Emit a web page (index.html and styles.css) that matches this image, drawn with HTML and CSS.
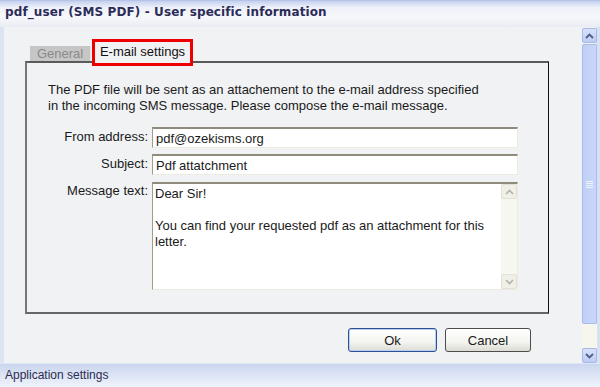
FILE: index.html
```html
<!DOCTYPE html>
<html lang="en">
<head>
    <meta charset="UTF-8">
    <title>pdf_user (SMS PDF) - User specific information</title>
    <link rel="stylesheet" href="styles.css">
</head>
<body>
    <div class="window">
        <div class="titlebar">pdf_user (SMS PDF) - User specific information</div>

        <div class="main">
            <div class="content">
                <div class="tabs">
                    <div class="tab">General</div>
                    <div class="tab active">E-mail settings</div>
                </div>

                <div class="panel">
                    <p class="intro">The PDF file will be sent as an attachement to the e-mail address specified in the incoming SMS message. Please compose the e-mail message.</p>

                    <div class="form">
                        <label for="from">From address:</label>
                        <input type="text" id="from" value="pdf@ozekisms.org">

                        <label for="subject">Subject:</label>
                        <input type="text" id="subject" value="Pdf attatchment">

                        <label>Message text:</label>
                        <div class="textarea">
                            <div class="textarea-text">
                                <p>Dear Sir!</p>
                                <p>You can find your requested pdf as an attachment for this letter.</p>
                            </div>
                            <div class="mini-scroll">
                                <div class="mini-btn">
                                    <svg width="9" height="6" viewBox="0 0 9 6"><polyline points="1,5 4.5,1.5 8,5" fill="none" stroke="#b4b4a8" stroke-width="1.6"/></svg>
                                </div>
                                <div class="mini-track"></div>
                                <div class="mini-btn">
                                    <svg width="9" height="6" viewBox="0 0 9 6"><polyline points="1,1 4.5,4.5 8,1" fill="none" stroke="#b4b4a8" stroke-width="1.6"/></svg>
                                </div>
                            </div>
                        </div>
                    </div>
                </div>

                <div class="buttons">
                    <button class="btn default">Ok</button>
                    <button class="btn">Cancel</button>
                </div>
            </div>

            <div class="scrollbar">
                <div class="scroll-btn">
                    <svg width="9" height="6" viewBox="0 0 9 6"><polyline points="1,5 4.5,1.5 8,5" fill="none" stroke="#4d5f86" stroke-width="1.8"/></svg>
                </div>
                <div class="scroll-thumb">
                    <span class="grip"></span>
                </div>
                <div class="scroll-track"></div>
                <div class="scroll-btn">
                    <svg width="9" height="6" viewBox="0 0 9 6"><polyline points="1,1 4.5,4.5 8,1" fill="none" stroke="#4d5f86" stroke-width="1.8"/></svg>
                </div>
            </div>
        </div>

        <div class="statusbar">Application settings</div>
    </div>
</body>
</html>
```

FILE: styles.css
```css
* {
    margin: 0;
    padding: 0;
    box-sizing: border-box;
}

body {
    width: 600px;
    height: 387px;
    overflow: hidden;
    background: #f1f2f4;
    font-family: 'Liberation Sans', Arial, sans-serif;
    font-size: 13px;
    color: #1a1a1a;
}

.window {
    display: flex;
    flex-direction: column;
    height: 387px;
}

.titlebar {
    height: 27px;
    padding: 4px 0 0 5px;
    background: linear-gradient(to bottom, #c4d0ee 0%, #eef1f9 25%, #f7f8fb 60%, #e9ecf3 100%);
    border-top: 1px solid #b6c4ea;
    font-family: 'DejaVu Sans', Verdana, sans-serif;
    font-weight: bold;
    font-size: 12px;
    color: #2c2c58;
    letter-spacing: 0.1px;
}

.main {
    flex: 1;
    display: flex;
    border-left: 4px solid #dce4f4;
    border-right: 4px solid #d8e1f4;
}

.content {
    flex: 1;
    padding: 12px 0 0 21px;
}

/* tabs */

.tabs {
    display: flex;
    align-items: flex-end;
    height: 22px;
    padding-left: 5px;
    gap: 1px;
}

.tab {
    height: 15px;
    width: 61px;
    background: #c6c6c6;
    color: #8a8a8a;
    text-align: center;
    line-height: 15px;
    border-right: 1px solid #e4e4e4;
}

.tab.active {
    position: relative;
    z-index: 1;
    width: 101px;
    height: 27px;
    margin-bottom: -5px;
    background: #f1f2f4;
    color: #111;
    border: 3px solid #ee0000;
    line-height: 19px;
}

.panel {
    width: 524px;
    height: 253px;
    border: 1px solid #111;
    border-top: 2px solid #5a5a5a;
    border-left: 2px solid #777;
    border-bottom: 2px solid #666;
    padding: 19px 0 0 21px;
}

.intro {
    width: 436px;
    line-height: 16px;
    color: #1a1a1a;
}

/* form */

.form {
    display: grid;
    grid-template-columns: 100px 366px;
    column-gap: 4px;
    row-gap: 6px;
    margin-top: 13px;
}

.form label {
    text-align: right;
    padding-top: 2px;
    color: #1a1a1a;
}

.form input {
    height: 21px;
    padding: 1px 0 0 3px;
    font-family: inherit;
    font-size: 13px;
    color: #1a1a1a;
    background: #fff;
    border: 1px solid #ecebe2;
    border-top: 2px solid #8e8b7c;
    border-left: 1px solid #a09c8c;
    outline: none;
}

.textarea {
    display: flex;
    height: 108px;
    margin-top: 1px;
    background: #fff;
    border: 1px solid #ecebe2;
    border-top: 2px solid #8e8b7c;
    border-left: 1px solid #a09c8c;
}

.textarea-text {
    flex: 1;
    padding: 2px 6px 0 2px;
    line-height: 16px;
}

.textarea-text p {
    margin-bottom: 16px;
}

.textarea-text p:last-child {
    margin-bottom: 0;
}

.mini-scroll {
    width: 16px;
    display: flex;
    flex-direction: column;
    background: #f7f7f2;
}

.mini-btn {
    height: 15px;
    display: flex;
    align-items: center;
    justify-content: center;
    background: #f0efe8;
    border: 1px solid #e2e1d8;
    border-radius: 2px;
}

.mini-track {
    flex: 1;
}

/* buttons */

.buttons {
    display: flex;
    justify-content: flex-end;
    gap: 8px;
    padding-right: 51px;
    margin-top: 14px;
}

.btn {
    height: 24px;
    width: 86px;
    font-family: inherit;
    font-size: 13px;
    color: #1a1a1a;
    background: linear-gradient(to bottom, #ffffff 0%, #f4f4f0 60%, #dcdcd4 100%);
    border: 1px solid #4c4c4c;
    border-radius: 3px;
}

.btn.default {
    width: 89px;
    border: 1px solid #2f4f94;
    box-shadow: inset 0 0 0 1px #b8cff4;
}

/* window scrollbar */

.scrollbar {
    width: 15px;
    margin-right: -1px;
    display: flex;
    flex-direction: column;
    padding-top: 1px;
}

.scroll-btn {
    height: 15px;
    display: flex;
    align-items: center;
    justify-content: center;
    background: linear-gradient(to bottom, #d8e2fa, #bccdf4);
    border: 1px solid #a7b9e6;
    border-radius: 2px;
}

.scroll-thumb {
    height: 280px;
    margin-top: 1px;
    display: flex;
    align-items: center;
    justify-content: center;
    background: linear-gradient(to right, #c0cff6, #c8d6fa);
    border: 1px solid #a9bbea;
    border-radius: 2px;
}

.grip {
    width: 7px;
    height: 7px;
    background: repeating-linear-gradient(to bottom, #eef2fd 0, #eef2fd 1px, transparent 1px, transparent 2px);
}

.scroll-track {
    flex: 1;
    background: #f6f5ee;
}

.statusbar {
    height: 24px;
    padding: 4px 0 0 5px;
    background: linear-gradient(to bottom, #cad6ee 0%, #dde5f5 50%, #eef2fa 100%);
    border-top: 1px solid #dfe6f4;
    font-size: 12px;
    color: #2c2c50;
}
```
